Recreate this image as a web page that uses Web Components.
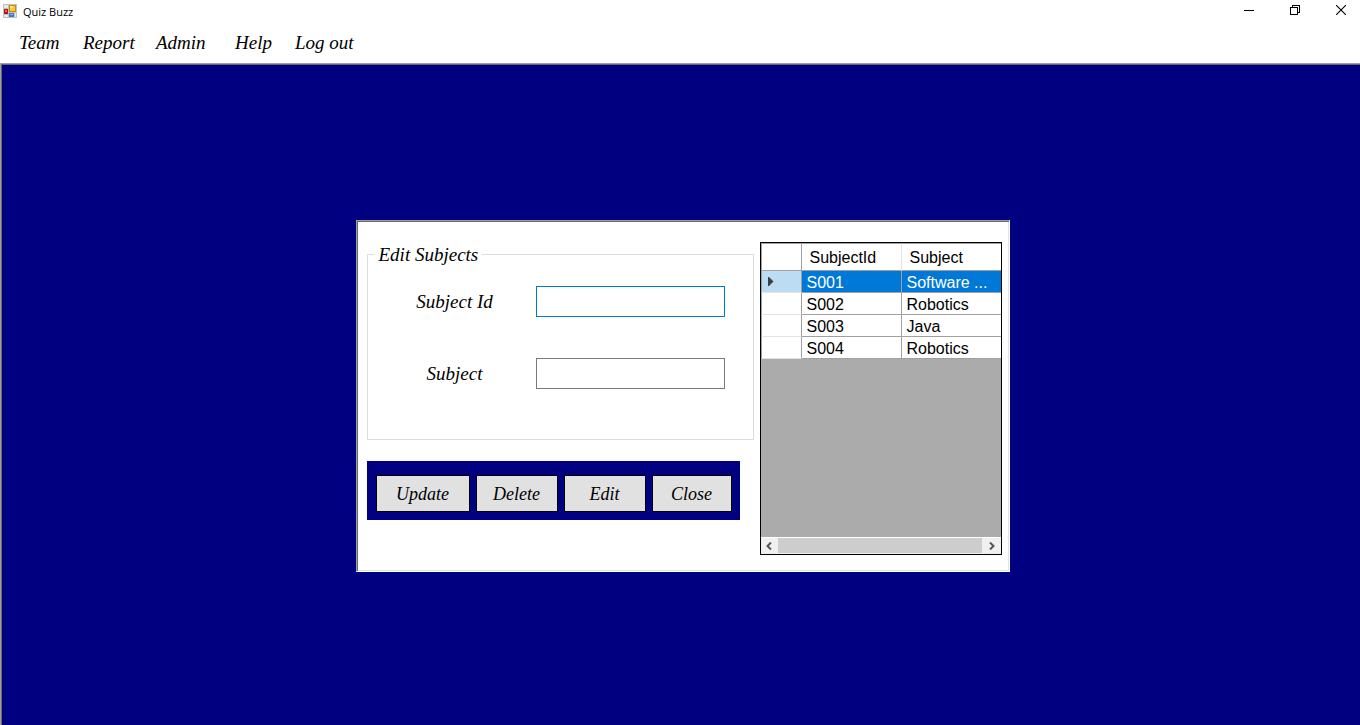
<!DOCTYPE html>
<html lang="en">
<head>
<meta charset="utf-8">
<title>Quiz Buzz</title>
<style>
  body {
    margin: 0;
    background: #fff;
    color: #000;
    --script: italic 19px/24px "Monotype Corsiva", "Liberation Serif", serif;
    --script-small: italic 18px/24px "Monotype Corsiva", "Liberation Serif", serif;
    --navy: #000080;
  }
</style>
</head>
<body>
<quiz-window></quiz-window>
<script>
const define = (name, html, setup) => {
  const template = document.createElement('template');
  template.innerHTML = '<style>*{box-sizing:border-box}</style>' + html;
  customElements.define(name, class extends HTMLElement {
    constructor() {
      super();
      this.attachShadow({ mode: 'open' }).append(template.content.cloneNode(true));
    }
    connectedCallback() { if (setup) setup(this, this.shadowRoot); }
  });
};

define('title-bar', `
<style>
  :host { display: flex; align-items: center; box-sizing: border-box; height: 24px; padding: 0 0 2px 3px; font: 11px/22px "Open Sans", sans-serif; }
  .logo { margin-right: 6px; }
  .title { flex: 1; font: inherit; margin: 2px 0 0; }
  button { width: 46px; height: 20px; margin: 0 0 2px; padding: 0; border: 0; background: none; display: flex; align-items: center; justify-content: center; }
  .last { width: 38px; margin-left: 4px; }
  svg { display: block; }
</style>
<svg class="logo" width="14" height="14" viewBox="0 0 14 14" shape-rendering="crispEdges" aria-hidden="true">
  <rect width="14" height="14" fill="#c3c3c3"/>
  <rect x="1" y="1" width="4" height="3" fill="#e9e9e9"/><rect x="1" y="11" width="4" height="2" fill="#e9e9e9"/>
  <rect x="1" y="5" width="4" height="5" fill="#b3180c"/><rect x="2" y="6" width="2" height="2" fill="#ee6a50"/>
  <rect x="6" y="1" width="7" height="7" fill="#c48a08"/><rect x="7" y="2" width="5" height="5" fill="#fcc73a"/><rect x="7" y="2" width="3" height="2" fill="#ffe48d"/>
  <rect x="6" y="9" width="5" height="4" fill="#3d74dd"/><rect x="7" y="10" width="3" height="1" fill="#90b6ff"/>
  <rect x="12" y="9" width="1" height="4" fill="#e9e9e9"/>
</svg>
<h1 class="title">Quiz Buzz</h1>
<button aria-label="Minimize"><svg width="10" height="10" shape-rendering="crispEdges"><path d="M0 5.5h10" stroke="#000"/></svg></button>
<button aria-label="Restore"><svg width="10" height="10" shape-rendering="crispEdges"><path d="M.5 2.5h7v7h-7zM2.5 2.5v-2h7v7h-2" fill="none" stroke="#000"/></svg></button>
<button class="last" aria-label="Close window"><svg width="10" height="10"><path d="M0 0l10 10M10 0L0 10" stroke="#000" stroke-width="1.1"/></svg></button>
`);

define('menu-bar', `
<style>
  :host { display: block; padding: 7px 19px 8px; font: var(--script); }
  nav { display: grid; grid-template-columns: 64px 73px 79px 60px auto; justify-content: start; }
  a { color: inherit; text-decoration: none; white-space: nowrap; }
</style>
<nav><a href="#team">Team</a><a href="#report">Report</a><a href="#admin">Admin</a><a href="#help">Help</a><a href="#logout">Log out</a></nav>
`);

define('form-field', `
<style>
  :host { display: grid; grid-template-columns: 168px minmax(0, 189px); align-items: center; font: var(--script); }
  label { text-align: center; padding-left: 6px; }
  input { width: 100%; height: 31px; padding: 2px 6px; border: 1px solid #7a7a7a; border-radius: 0; outline: 0; background: #fff; font: inherit; }
  :host([active]) input, input:focus { border-color: #0078d7; }
</style>
<label for="box"></label><input id="box" type="text">
`, (host, root) => { root.querySelector('label').textContent = host.getAttribute('label'); });

define('group-box', `
<style>
  :host { display: block; }
  fieldset { margin: 0; padding: 19px 0 50px; min-width: 0; border: 1px solid #dcdcdc; }
  legend { margin-left: 6px; padding: 1px 4px 0 5px; font: var(--script); }
  .fields { display: grid; gap: 41px; }
</style>
<fieldset><legend></legend><div class="fields"><slot></slot></div></fieldset>
`, (host, root) => { root.querySelector('legend').textContent = host.getAttribute('caption'); });

define('action-button', `
<style>
  :host { display: block; flex: 82 1 0; }
  :host([wide]) { flex-grow: 94; }
  :host([narrow]) { flex-grow: 80; }
  button { width: 100%; height: 37px; padding: 0; border: 1px solid #000; border-radius: 0; background: #e1e1e1; color: #000; font: var(--script-small); }
</style>
<button type="button"><slot></slot></button>
`);

define('button-panel', `
<style>
  :host { display: flex; gap: 6px; padding: 14px 8px 8px 9px; background: var(--navy); }
</style>
<slot></slot>
`);

define('scroll-strip', `
<style>
  :host { display: flex; box-sizing: border-box; height: 17px; border-top: 1px solid #fff; background: #f0f0f0; }
  button { width: 17px; padding: 0; border: 0; background: none; display: flex; align-items: center; justify-content: center; }
  .track { flex: 1; display: flex; }
  .thumb { flex: 1; margin-right: 2px; margin-bottom: 1px; background: #cdcdcd; }
</style>
<button type="button" aria-label="Scroll left"><svg width="6" height="8"><path d="M5 .5L1.5 4L5 7.5" fill="none" stroke="#555" stroke-width="2"/></svg></button>
<div class="track"><div class="thumb"></div></div>
<button type="button" aria-label="Scroll right"><svg width="6" height="8"><path d="M1 .5L4.5 4L1 7.5" fill="none" stroke="#555" stroke-width="2"/></svg></button>
`);

define('subject-table', `
<style>
  :host { display: flex; flex-direction: column; border: 1px solid #000; background: #ababab; font: 16px/19px "Liberation Sans", Arial, sans-serif; }
  table { width: 100%; table-layout: fixed; border-collapse: separate; border-spacing: 0; background: #fff; }
  th, td { height: 22px; padding: 2px 4px 0 5px; border-right: 1px solid #a0a0a0; border-bottom: 1px solid #a0a0a0; font-weight: normal; text-align: left; white-space: nowrap; overflow: hidden; }
  thead th { height: 28px; padding: 1px 8px 0; border-top: 1px solid #a0a0a0; border-right-color: #e3e3e3; }
  th:first-child { padding: 0 6px; border-left: 1px solid #a0a0a0; border-right-color: #a0a0a0; }
  tbody th { border-bottom-color: #e3e3e3; }
  tr > :last-child { border-right: 0; }
  .marker { width: 41px; }
  .wide { width: 100px; }
  .selected td { background: #0078d7; color: #fff; }
  .selected th { background: #bcdcf4; }
  svg { display: block; }
  scroll-strip { margin-top: auto; }
</style>
<table>
  <colgroup><col class="marker"><col class="wide"><col></colgroup>
  <thead><tr><th></th><th scope="col">SubjectId</th><th scope="col">Subject</th></tr></thead>
  <tbody>
    <tr class="selected"><th><svg width="6" height="9"><path d="M0 0h1l4.500 4.500L1 9H0z" fill="#404040"/></svg></th><td>S001</td><td>Software ...</td></tr>
    <tr><th></th><td>S002</td><td>Robotics</td></tr>
    <tr><th></th><td>S003</td><td>Java</td></tr>
    <tr><th></th><td>S004</td><td>Robotics</td></tr>
  </tbody>
</table>
<scroll-strip></scroll-strip>
`);

define('subject-editor', `
<style>
  :host { display: grid; box-sizing: border-box; grid-template-columns: minmax(0, 387fr) minmax(0, 242fr); gap: 6px; width: 100%; max-width: 654px; padding: 21px 7px 16px 10px; background: #fff; border: 1px solid; border-color: #a0a0a0 #fff #fff #a0a0a0; box-shadow: inset 1px 1px #696969, inset -1px -1px #e3e3e3; }
  button-panel { margin: 21px 14px 35px 0; }
</style>
<div>
  <group-box caption="Edit Subjects">
    <form-field label="Subject Id" active></form-field>
    <form-field label="Subject"></form-field>
  </group-box>
  <button-panel>
    <action-button wide>Update</action-button>
    <action-button>Delete</action-button>
    <action-button>Edit</action-button>
    <action-button narrow>Close</action-button>
  </button-panel>
</div>
<subject-table></subject-table>
`);

define('quiz-window', `
<style>
  :host { display: flex; flex-direction: column; min-height: 100vh; }
  main { flex: 1; display: flex; align-items: center; justify-content: center; padding: 3px 0 0 4px; background: var(--navy); border: solid #a0a0a0; border-width: 1px 0 0 1px; box-shadow: inset 1px 1px #696969; }
</style>
<title-bar></title-bar>
<menu-bar></menu-bar>
<main><subject-editor></subject-editor></main>
`);
</script>
</body>
</html>
